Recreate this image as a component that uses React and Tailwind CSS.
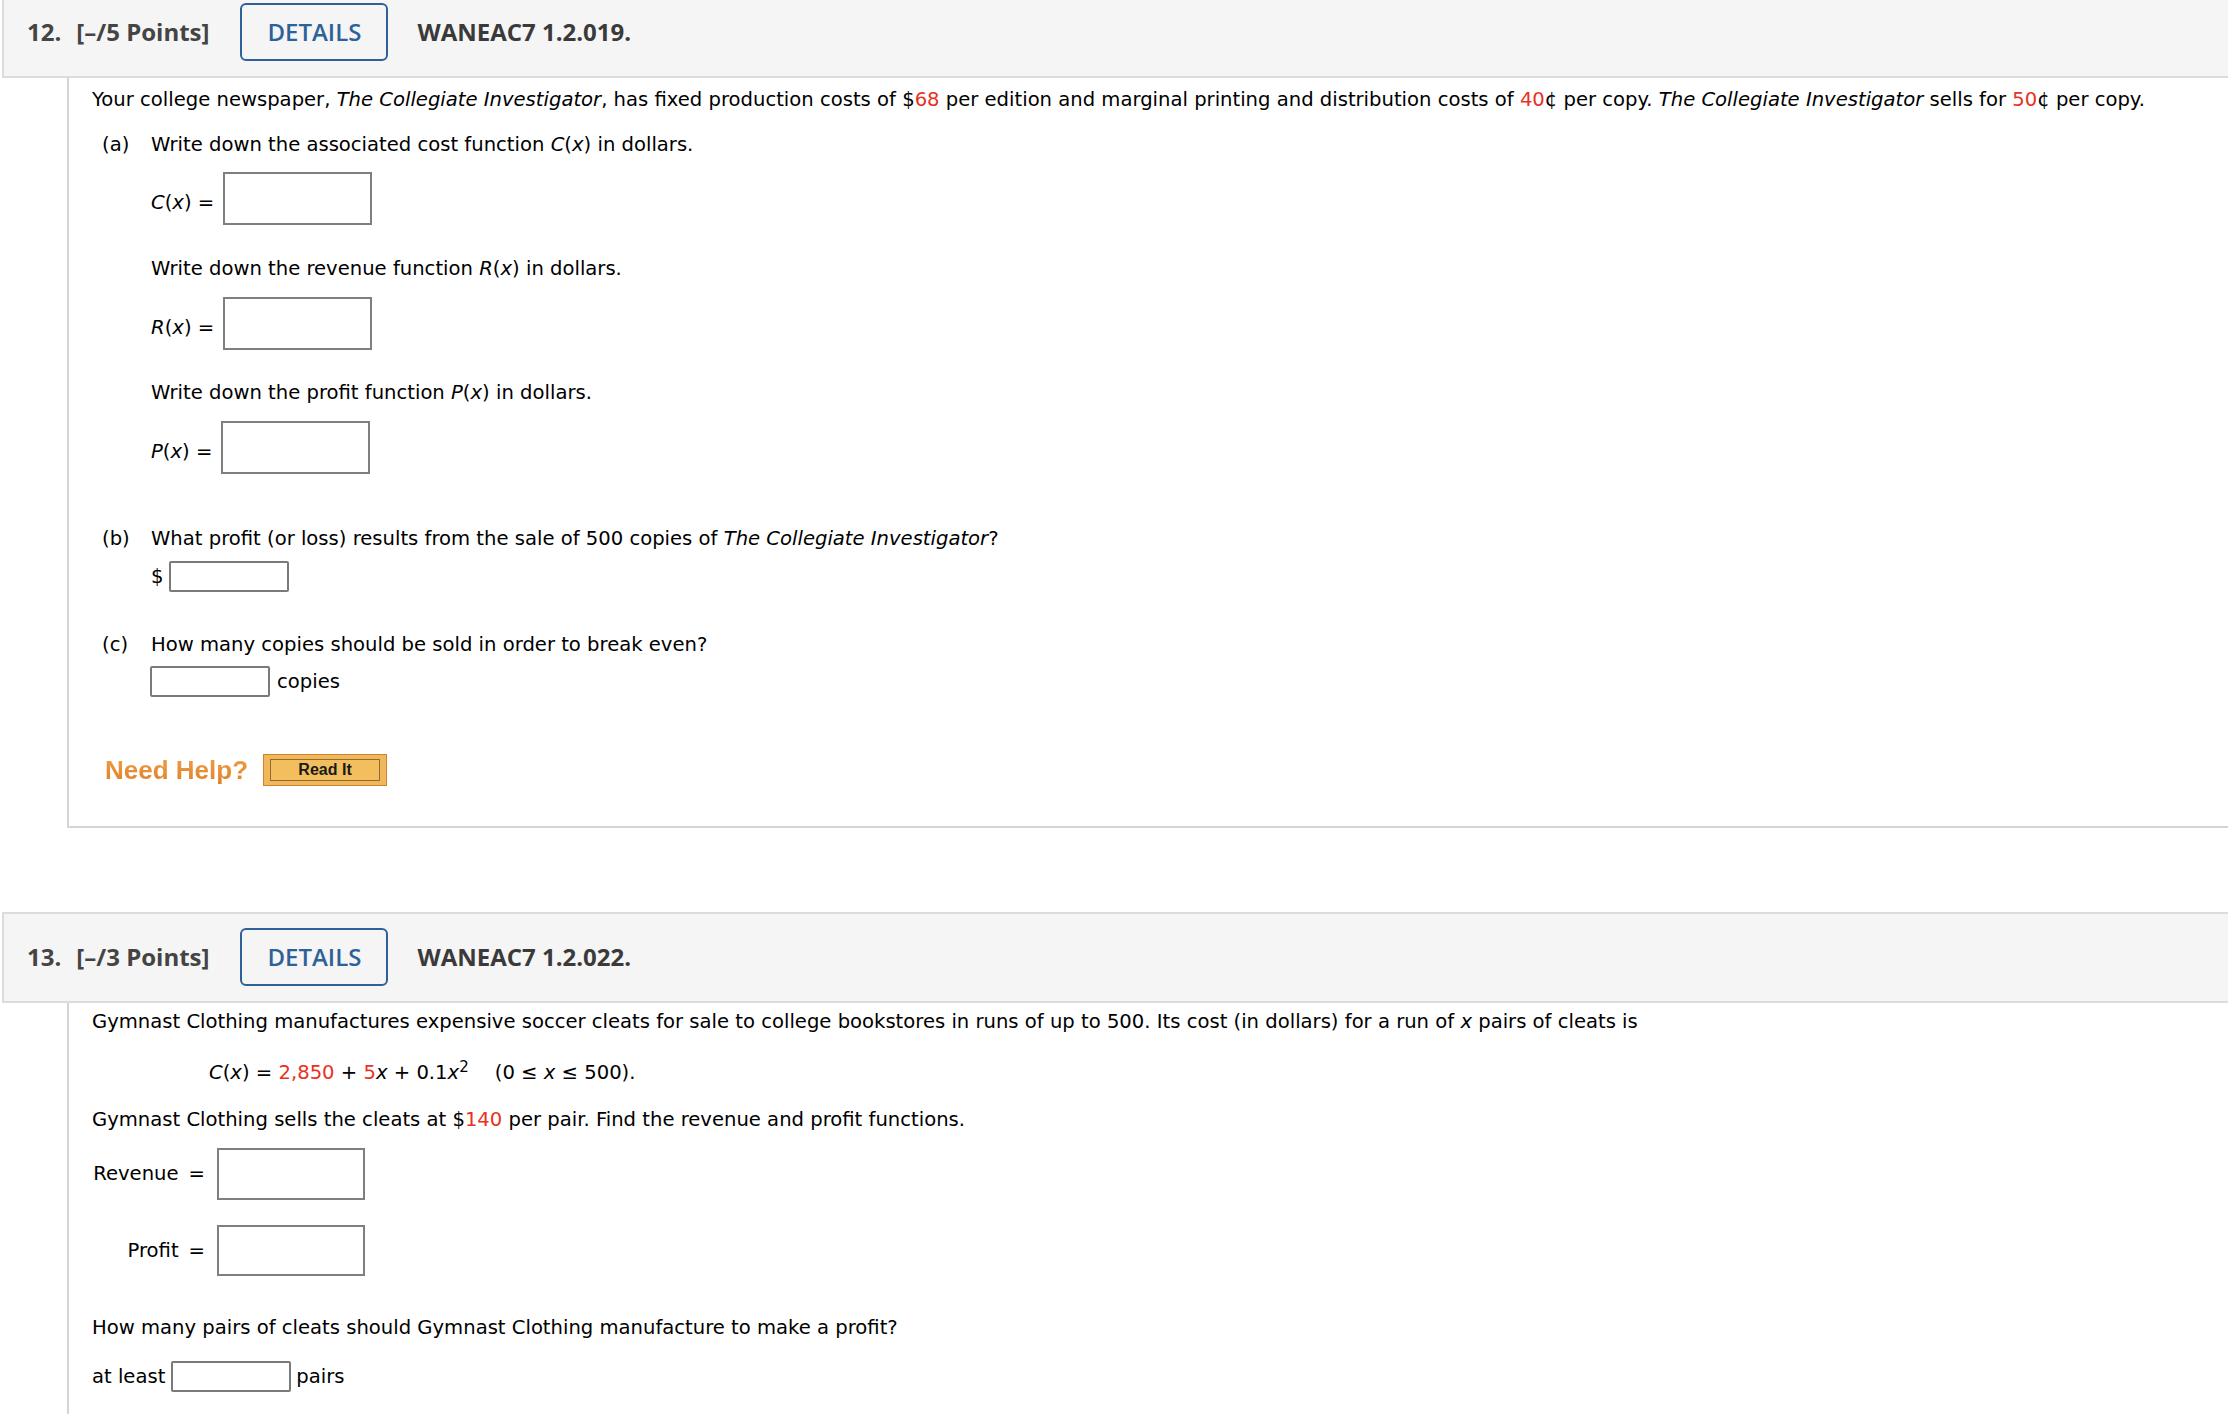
import React from 'react';

const Red = ({ children }) => <span className="text-[#e8321f]">{children}</span>;

function Header({ num, points, code }) {
  return (
    <div className="ml-[2px] flex items-center border-2 border-r-0 border-[#dcdcdc] bg-[#f5f5f5] pb-[15px] pl-[23px] pt-[14px] font-['Open_Sans',sans-serif]">
      <span className="text-[24px] font-bold text-[#444]">{num}.</span>
      <span className="ml-[15px] text-[24px] font-bold text-[#444]">[–/{points} Points]</span>
      <div className="ml-[31px] flex h-[58px] w-[148px] items-center justify-center rounded-[6px] border-2 border-[#2d6299] text-[24px] font-semibold text-[#2d6299]">
        DETAILS
      </div>
      <span className="ml-[29px] text-[24px] font-bold text-[#3a3a3a]">{code}</span>
    </div>
  );
}

function Box({ w = 'w-[149px]', h = 'h-[53px]' }) {
  return <div className={`${w} ${h} shrink-0 border-2 border-[#7f7f7f] bg-white`} />;
}

function SmallBox() {
  return <div className="h-[31px] w-[120px] shrink-0 rounded-[2px] border-2 border-[#7a7a7a] bg-white" />;
}

function FnRow({ letter }) {
  return (
    <div className="mt-[13px] flex items-center">
      <span className="pt-[9px]">
        <i>{letter}</i>(<i>x</i>) =
      </span>
      <div className="ml-[9px]">
        <Box />
      </div>
    </div>
  );
}

function Part({ label, children, className = '' }) {
  return (
    <div className={`ml-[10px] flex ${className}`}>
      <span className="w-[49px] shrink-0">{label}</span>
      <div>{children}</div>
    </div>
  );
}

function Question12() {
  return (
    <div className="ml-[67px] border-b-2 border-l-2 border-[#d4d4d4] pb-[40px] pl-[23px] pt-[7px]">
      <p className="whitespace-nowrap">
        Your college newspaper, <i>The Collegiate Investigator</i>, has fixed production costs of $<Red>68</Red> per
        edition and marginal printing and distribution costs of <Red>40</Red>¢ per copy.{' '}
        <i>The Collegiate Investigator</i> sells for <Red>50</Red>¢ per copy.
      </p>

      <Part label="(a)" className="mt-[15px]">
        <p>
          Write down the associated cost function <i>C</i>(<i>x</i>) in dollars.
        </p>
        <div className="mt-[-1px]">
          <FnRow letter="C" />
        </div>
        <p className="mt-[29px]">
          Write down the revenue function <i>R</i>(<i>x</i>) in dollars.
        </p>
        <FnRow letter="R" />
        <p className="mt-[28px]">
          Write down the profit function <i>P</i>(<i>x</i>) in dollars.
        </p>
        <FnRow letter="P" />
      </Part>

      <Part label="(b)" className="mt-[50px]">
        <p>
          What profit (or loss) results from the sale of 500 copies of <i>The Collegiate Investigator</i>?
        </p>
        <div className="mt-[7px] flex items-center gap-[6px]">
          <span>$</span>
          <SmallBox />
        </div>
      </Part>

      <Part label="(c)" className="mt-[38px]">
        <p>How many copies should be sold in order to break even?</p>
        <div className="-ml-[1px] mt-[6px] flex items-center gap-[7px]">
          <SmallBox />
          <span>copies</span>
        </div>
      </Part>

      <div className="ml-[13px] mt-[57px] flex items-center font-['Liberation_Sans',sans-serif]">
        <span className="bg-gradient-to-b from-[#f0a04a] to-[#df7f22] bg-clip-text text-[26px] font-bold text-transparent">
          Need Help?
        </span>
        <div className="ml-[15px] flex h-[32px] w-[124px] items-center justify-center border border-[#cf8229] bg-[#f0b85a] px-[6px] py-[4px]">
          <div className="flex h-full w-full items-center justify-center border border-[#8e6c36] bg-[#f3bf5e] text-[16px] font-bold text-[#1a1a1a]">
            Read It
          </div>
        </div>
      </div>
    </div>
  );
}

function LabelCell({ children }) {
  return (
    <span className="flex w-[125px] shrink-0 justify-end pr-[12px]">
      <span>{children}</span>
      <span className="ml-[10px]">=</span>
    </span>
  );
}

function Question13() {
  return (
    <div className="ml-[67px] border-l-2 border-[#d4d4d4] pb-[80px] pl-[23px] pt-[4px]">
      <p className="whitespace-nowrap">
        Gymnast Clothing manufactures expensive soccer cleats for sale to college bookstores in runs of up to 500. Its
        cost (in dollars) for a run of <i>x</i> pairs of cleats is
      </p>
      <p className="ml-[117px] mt-[21px] whitespace-nowrap">
        <i>C</i>(<i>x</i>) = <Red>2,850</Red> + <Red>5</Red>
        <i>x</i> + 0.1<i>x</i>
        <sup className="text-[15px]">2</sup>
        <span className="ml-[26px]">
          (0 ≤ <i>x</i> ≤ 500).
        </span>
      </p>
      <p className="mt-[17px]">
        Gymnast Clothing sells the cleats at $<Red>140</Red> per pair. Find the revenue and profit functions.
      </p>
      <div className="mt-[13px] flex items-center">
        <LabelCell>Revenue</LabelCell>
        <Box w="w-[148px]" h="h-[52px]" />
      </div>
      <div className="mt-[25px] flex items-center">
        <LabelCell>Profit</LabelCell>
        <Box w="w-[148px]" h="h-[51px]" />
      </div>
      <p className="mt-[37px]">How many pairs of cleats should Gymnast Clothing manufacture to make a profit?</p>
      <div className="mt-[18px] flex items-center gap-[6px]">
        <span>at least</span>
        <div className="-mr-[1px]">
          <SmallBox />
        </div>
        <span>pairs</span>
      </div>
    </div>
  );
}

export default function App() {
  return (
    <div className="h-[1414px] w-[2228px] overflow-hidden bg-white font-['DejaVu_Sans',sans-serif] text-[19.6px] leading-[30px] text-black">
      <div className="-mt-[13px]">
        <Header num="12" points="5" code="WANEAC7 1.2.019." />
        <Question12 />
        <div className="mt-[84px]">
          <Header num="13" points="3" code="WANEAC7 1.2.022." />
        </div>
        <Question13 />
      </div>
    </div>
  );
}
